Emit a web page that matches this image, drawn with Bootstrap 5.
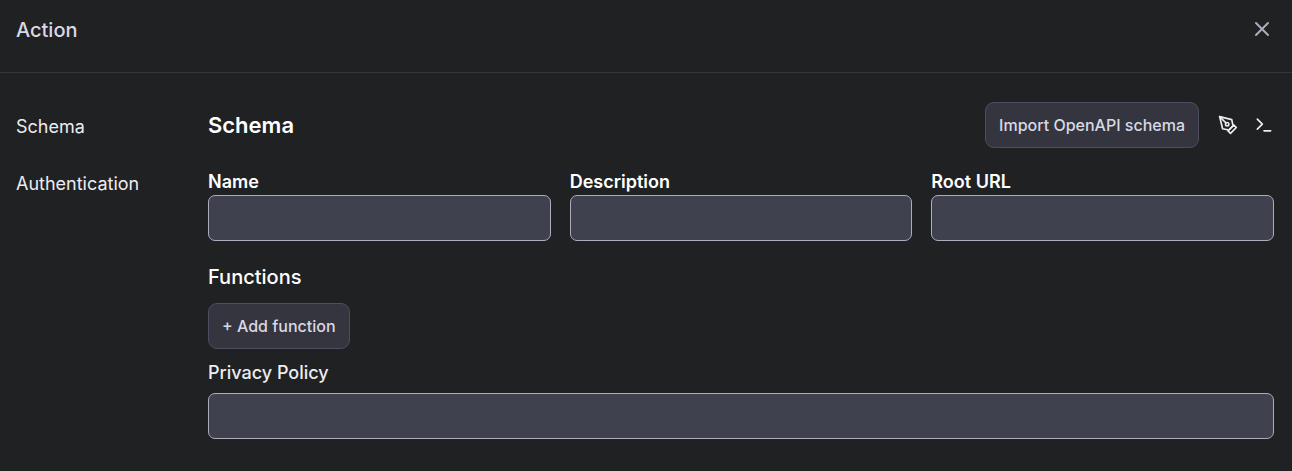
<!DOCTYPE html>
<html lang="en" data-bs-theme="dark">
<head>
<meta charset="utf-8">
<meta name="viewport" content="width=device-width, initial-scale=1">
<title>Action</title>
<link href="https://cdn.jsdelivr.net/npm/bootstrap@5.3.0/dist/css/bootstrap.min.css" rel="stylesheet">
<style>
  body { background: #202123; color: #fff; font-family: Inter, "Liberation Sans", sans-serif; font-size: 18px; line-height: 26px; }
  .panel-head { height: 73px; padding: 18px 18px 0 16px; border-bottom: 1px solid #353639; }
  .panel-title { font-size: 20px; line-height: 24px; font-weight: 500; color: #d9d9e3; }
  .icon-button { background: none; border: 0; padding: 0; line-height: 0; color: #ececf1; }
  .icon-button.dismiss { color: #acacbe; }
  .panel-body { padding: 29px 18px 32px 16px; }
  .side-links { width: 192px; padding-top: 12px; gap: 31px; }
  .side-links a { color: #ececf1; text-decoration: none; }
  .section-title { font-size: 22px; line-height: 26px; font-weight: 600; }
  .sub-title { font-size: 20px; line-height: 24px; font-weight: 500; }
  .tool-icons { margin-left: 19px; }
  .btn-soft { height: 46px; padding: 0 13px; border: 1px solid #4d4d5f; border-radius: 9px; background: #353540; color: #d9d9e3; font-size: 16px; font-weight: 500; }
  .btn-soft:hover { background: #40414f; color: #fff; }
  .add-button { margin-top: 14px; }
  .field-grid { display: grid; grid-template-columns: repeat(3, 1fr); gap: 19px; margin-top: 21px; }
  .field-grid label { font-weight: 600; }
  .policy-label { margin: 11px 0 7px; color: #ececf1; font-weight: 500; }
  .box { height: 46px; background: #40414f; border: 1px solid #acacbe; border-radius: 7px; }
</style>
</head>
<body>
<header class="panel-head d-flex justify-content-between align-items-start">
  <h1 class="panel-title mb-0">Action</h1>
  <button type="button" class="icon-button dismiss" aria-label="Close">
    <svg width="24" height="24" viewBox="0 0 24 24" fill="none" stroke="currentColor" stroke-width="2" stroke-linecap="round" stroke-linejoin="round"><path d="M18 5 6 17M6 5l12 12"/></svg>
  </button>
</header>
<div class="panel-body d-flex">
  <nav class="side-links d-flex flex-column flex-shrink-0" aria-label="Sections">
    <a href="#schema">Schema</a>
    <a href="#authentication">Authentication</a>
  </nav>
  <main class="flex-grow-1" id="schema">
    <div class="d-flex align-items-center justify-content-between">
      <h2 class="section-title mb-0">Schema</h2>
      <div class="d-flex align-items-center">
        <button type="button" class="btn btn-soft">Import OpenAPI schema</button>
        <div class="tool-icons d-flex gap-3">
          <button type="button" class="icon-button" aria-label="Edit with pen">
            <svg width="20" height="20" viewBox="0 0 24 24" fill="none" stroke="currentColor" stroke-width="2" stroke-linecap="round" stroke-linejoin="round"><path d="m12 19 7-7 3 3-7 7-3-3z"/><path d="m18 13-1.500-7.500L2 2l3.500 14.500L13 18l5-5z"/><path d="m2 2 7.586 7.586"/><circle cx="11" cy="11" r="2"/></svg>
          </button>
          <button type="button" class="icon-button" aria-label="Open terminal">
            <svg width="20" height="20" viewBox="0 0 24 24" fill="none" stroke="currentColor" stroke-width="2" stroke-linecap="round" stroke-linejoin="round"><path d="m4 17 6-6-6-6M12 19h8"/></svg>
          </button>
        </div>
      </div>
    </div>
    <div class="field-grid">
      <div><label class="d-block" for="name">Name</label><input class="form-control box" id="name" type="text"></div>
      <div><label class="d-block" for="description">Description</label><input class="form-control box" id="description" type="text"></div>
      <div><label class="d-block" for="root-url">Root URL</label><input class="form-control box" id="root-url" type="url"></div>
    </div>
    <h3 class="sub-title mt-4 mb-0">Functions</h3>
    <button type="button" class="btn btn-soft add-button d-block">+ Add function</button>
    <label class="policy-label d-block" for="privacy">Privacy Policy</label>
    <input class="form-control box" id="privacy" type="url">
  </main>
</div>
<script src="https://cdn.jsdelivr.net/npm/bootstrap@5.3.0/dist/js/bootstrap.bundle.min.js"></script>
</body>
</html>
